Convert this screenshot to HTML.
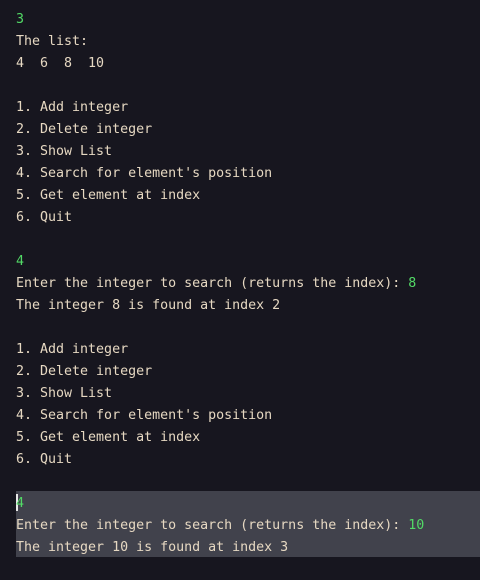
<!DOCTYPE html>
<html><head><style>
html,body{margin:0;padding:0;background:#17161f;width:480px;height:580px;overflow:hidden}
pre{margin:0;position:absolute;top:9px;left:16px;font-family:"DejaVu Sans Mono","Liberation Mono",monospace;font-size:13.3px;line-height:22px;color:#e6d8c2}
.g{color:#52d966}
.hl{position:absolute;left:16px;top:491px;width:464px;height:66px;background:#41424c}
.cur{position:absolute;left:16px;top:494px;width:2px;height:17px;background:#e8e8e8}
</style></head><body>
<div class="hl"></div><div class="cur"></div>
<pre><span class="g">3</span>
The list:
4  6  8  10

1. Add integer
2. Delete integer
3. Show List
4. Search for element's position
5. Get element at index
6. Quit

<span class="g">4</span>
Enter the integer to search (returns the index): <span class="g">8</span>
The integer 8 is found at index 2

1. Add integer
2. Delete integer
3. Show List
4. Search for element's position
5. Get element at index
6. Quit

<span class="g">4</span>
Enter the integer to search (returns the index): <span class="g">10</span>
The integer 10 is found at index 3</pre>
</body></html>
